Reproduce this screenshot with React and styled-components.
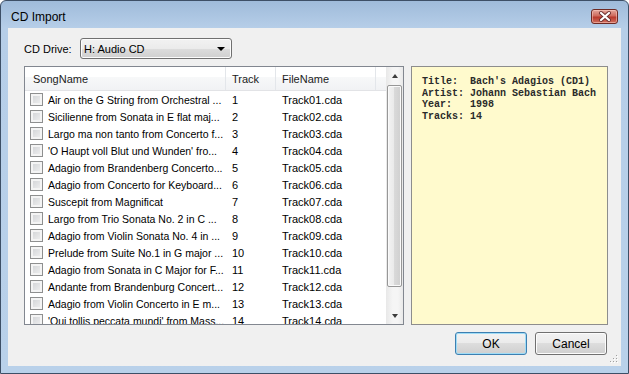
import React from "react";
import styled, { createGlobalStyle } from "styled-components";

const songs = [
  "Air on the G String from Orchestral ...",
  "Sicilienne from Sonata in E flat maj...",
  "Largo ma non tanto from Concerto f...",
  "'O Haupt voll Blut und Wunden' fro...",
  "Adagio from Brandenberg Concerto...",
  "Adagio from Concerto for Keyboard...",
  "Suscepit from Magnificat",
  "Largo from Trio Sonata No. 2 in C ...",
  "Adagio from Violin Sonata No. 4 in ...",
  "Prelude from Suite No.1 in G major ...",
  "Adagio from Sonata in C Major for F...",
  "Andante from Brandenburg Concert...",
  "Adagio from Violin Concerto in E m...",
  "'Qui tollis peccata mundi' from Mass...",
];

const info = `Title:  Bach's Adagios (CD1)
Artist: Johann Sebastian Bach
Year:   1998
Tracks: 14`;

export default function App() {
  return (
    <>
      <GlobalStyle />
      <Window>
        <TitleBar>
          <Title>CD Import</Title>
          <CloseButton>
            <svg width="24" height="13" viewBox="0 0 24 13">
              <path d="M8 3 L16 10 M16 3 L8 10" stroke="#6b3030" strokeWidth="4" strokeLinecap="round" />
              <path d="M8 3 L16 10 M16 3 L8 10" stroke="#ffffff" strokeWidth="2.2" strokeLinecap="round" />
            </svg>
          </CloseButton>
        </TitleBar>
        <Client>
          <DriveRow>
            <Label>CD Drive:</Label>
            <Combo>
              <span>H: Audio CD</span>
              <DropArrow />
            </Combo>
          </DriveRow>

          <Panels>
            <ListView>
              <TableArea>
                <HeaderRow>
                  <HeaderCell $pad={8}>SongName</HeaderCell>
                  <HeaderCell>Track</HeaderCell>
                  <HeaderCell>FileName</HeaderCell>
                  <HeaderCell $last />
                </HeaderRow>
                {songs.map((s, i) => (
                  <Row key={i}>
                    <SongCell>
                      <Check />
                      <SongText>{s}</SongText>
                    </SongCell>
                    <Cell>{i + 1}</Cell>
                    <Cell>Track{String(i + 1).padStart(2, "0")}.cda</Cell>
                  </Row>
                ))}
              </TableArea>
              <ScrollBar>
                <ScrollButton>
                  <ArrowUp />
                </ScrollButton>
                <ScrollTrack>
                  <Thumb />
                </ScrollTrack>
                <ScrollButton>
                  <ArrowDown />
                </ScrollButton>
              </ScrollBar>
            </ListView>
            <InfoPanel>{info}</InfoPanel>
          </Panels>

          <ButtonRow>
            <Button $focused>OK</Button>
            <Button>Cancel</Button>
          </ButtonRow>
          <SizeGrip>
            <svg width="10" height="10" viewBox="0 0 10 10">
              {[[8, 2], [8, 5], [5, 5], [8, 8], [5, 8], [2, 8]].map(([x, y], i) => (
                <g key={i}>
                  <rect x={x} y={y} width="1" height="1" fill="#fff" />
                  <rect x={x - 1} y={y - 1} width="1" height="1" fill="#a0a0a0" />
                </g>
              ))}
            </svg>
          </SizeGrip>
        </Client>
      </Window>
    </>
  );
}

const GlobalStyle = createGlobalStyle`
  body {
    margin: 0;
    background: #ffffff;
    font-family: "Liberation Sans", Arial, sans-serif;
    font-size: 11px;
    color: #000;
  }
`;

const Window = styled.div`
  width: 629px;
  height: 374px;
  box-sizing: border-box;
  border: 1px solid #3d4f66;
  border-radius: 6px 6px 0 0;
  padding: 0 7px 7px;
  background: linear-gradient(#9fbbda, #b6cee8 27px, #b9d1ea);
  display: flex;
  flex-direction: column;
  overflow: hidden;
`;

const TitleBar = styled.div`
  height: 27px;
  box-sizing: border-box;
  padding: 4px 3px 0 3px;
  display: flex;
  align-items: center;
  justify-content: space-between;
`;

const Title = styled.span`
  font-size: 12px;
  color: #000;
`;

const CloseButton = styled.div`
  width: 27px;
  height: 15px;
  box-sizing: border-box;
  border: 1px solid #6e2a24;
  border-radius: 3px;
  background: linear-gradient(#e3a79c, #cf6a5c 45%, #b8392c 55%, #d0705f);
  box-shadow: inset 0 0 0 1px rgba(255, 210, 200, 0.5);
  display: flex;
  align-items: center;
  justify-content: center;
`;

const Client = styled.div`
  flex: 1;
  position: relative;
  background: #f0f0f0;
  padding: 10px 13px 11px 16px;
  display: flex;
  flex-direction: column;
`;

const DriveRow = styled.div`
  display: flex;
  align-items: center;
  height: 21px;
  margin-bottom: 7px;
`;

const Label = styled.span`
  width: 56px;
`;

const Combo = styled.div`
  width: 152px;
  height: 21px;
  box-sizing: border-box;
  border: 1px solid #707070;
  border-radius: 3px;
  background: linear-gradient(#f2f2f2, #ebebeb 50%, #dddddd 50%, #cfcfcf);
  box-shadow: inset 0 0 0 1px #fcfcfc;
  display: flex;
  align-items: center;
  justify-content: space-between;
  padding: 0 6px 0 3px;
`;

const DropArrow = styled.span`
  width: 0;
  height: 0;
  border-left: 4px solid transparent;
  border-right: 4px solid transparent;
  border-top: 4px solid #000;
`;

const Panels = styled.div`
  display: flex;
  gap: 7px;
  height: 259px;
`;

const ListView = styled.div`
  width: 380px;
  box-sizing: border-box;
  border: 1px solid #828790;
  background: #fff;
  display: flex;
`;

const TableArea = styled.div`
  flex: 1;
  overflow: hidden;
  display: flex;
  flex-direction: column;
`;

const columns = "201px 50px 100px 10px";

const HeaderRow = styled.div`
  display: grid;
  grid-template-columns: ${columns};
  height: 24px;
  flex-shrink: 0;
  background: linear-gradient(#ffffff, #ffffff 45%, #f7f8f9 45%, #f1f2f4);
  border-bottom: 1px solid #e2e3e6;
  box-sizing: border-box;
`;

const HeaderCell = styled.div`
  display: flex;
  align-items: center;
  padding-left: ${(p) => p.$pad ?? 6}px;
  border-right: ${(p) => (p.$last ? "none" : "1px solid #e3e6ea")};
  color: #1c1c1c;
`;

const Row = styled.div`
  display: grid;
  grid-template-columns: ${columns};
  height: 17px;
  flex-shrink: 0;
  align-items: center;
`;

const SongCell = styled.div`
  display: flex;
  align-items: center;
  gap: 5px;
  padding-left: 5px;
  min-width: 0;
  overflow: hidden;
`;

const SongText = styled.span`
  white-space: nowrap;
  font-size: 10.5px;
`;

const Cell = styled.div`
  padding-left: 6px;
  white-space: nowrap;
  overflow: hidden;
`;

const Check = styled.span`
  width: 13px;
  height: 13px;
  flex-shrink: 0;
  box-sizing: border-box;
  border: 1px solid #8e8f8f;
  background: linear-gradient(135deg, #cfd1d4, #f2f2f2);
  box-shadow: inset 0 0 0 2px #f4f4f4;
`;

const ScrollBar = styled.div`
  width: 17px;
  display: flex;
  flex-direction: column;
  background: linear-gradient(90deg, #e8e8e8, #f5f5f5 40%, #f5f5f5 70%, #e9e9e9);
`;

const ScrollButton = styled.div`
  height: 17px;
  flex-shrink: 0;
  display: flex;
  align-items: center;
  justify-content: center;
`;

const ArrowUp = styled.span`
  width: 0;
  height: 0;
  border-left: 3.5px solid transparent;
  border-right: 3.5px solid transparent;
  border-bottom: 4px solid #3c3c3c;
`;

const ArrowDown = styled.span`
  width: 0;
  height: 0;
  border-left: 3.5px solid transparent;
  border-right: 3.5px solid transparent;
  border-top: 4px solid #3c3c3c;
`;

const ScrollTrack = styled.div`
  flex: 1;
  padding: 1px 1px 0 1px;
`;

const Thumb = styled.div`
  height: 202px;
  box-sizing: border-box;
  border: 1px solid #979797;
  border-radius: 2px;
  background: linear-gradient(90deg, #f3f3f3, #e9e9e9 50%, #d9d9d9 50%, #cfcfcf);
  box-shadow: inset 0 0 0 1px #fafafa;
`;

const InfoPanel = styled.div`
  flex: 1;
  box-sizing: border-box;
  border: 1px solid #8d8d8d;
  background: #fffacd;
  padding: 9px 10px;
  font-family: "Liberation Mono", "Courier New", monospace;
  font-weight: bold;
  font-size: 10px;
  line-height: 11.5px;
  white-space: pre;
  color: #2a2a2a;
`;

const ButtonRow = styled.div`
  display: flex;
  justify-content: flex-end;
  gap: 8px;
  margin-top: 7px;
  padding-right: 1px;
`;

const Button = styled.div`
  width: 72px;
  height: 23px;
  box-sizing: border-box;
  border: 1px solid ${(p) => (p.$focused ? "#3c7fb1" : "#707070")};
  border-radius: 3px;
  background: linear-gradient(#f2f2f2, #ebebeb 50%, #dddddd 50%, #cfcfcf);
  box-shadow: inset 0 0 0 1px ${(p) => (p.$focused ? "#9fdcf6" : "#fcfcfc")};
  display: flex;
  align-items: center;
  justify-content: center;
  font-size: 12px;
`;

const SizeGrip = styled.div`
  position: absolute;
  right: 2px;
  bottom: 2px;
  width: 10px;
  height: 10px;
`;
